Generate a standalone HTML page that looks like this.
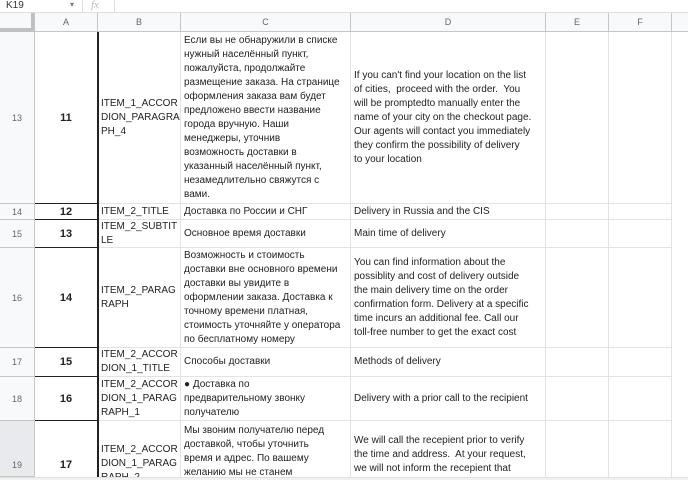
<!DOCTYPE html>
<html style="overflow:hidden;width:688px;height:480px"><head><meta charset="utf-8"><style>
*{margin:0;padding:0;box-sizing:border-box}
body{width:688px;height:480px;overflow:hidden;background:#fff;font-family:"Liberation Sans","DejaVu Sans",sans-serif;position:relative;color:#222}
.a{position:absolute}
.c{position:absolute;border-right:1px solid #e2e3e3;border-bottom:1px solid #e2e3e3;display:flex;align-items:center;overflow:hidden;font-size:10px;line-height:14px;white-space:nowrap;padding-left:3px}
.h{background:#f8f9fa;color:#666;font-size:9px;justify-content:center;padding:0;border-color:#c4c7c5}
.n{justify-content:center;font-weight:bold;font-size:11px;padding:0;border-bottom:1px solid #222}
</style></head><body>
<div class="a" style="left:0;top:0;width:688px;height:13px;border-bottom:1px solid #e0e0e0;background:#fff"></div>
<div class="a" style="left:6px;top:0;font-size:10px;line-height:12px;color:#333">K19</div>
<div class="a" style="left:70px;top:0;font-size:8px;color:#777">▾</div>
<div class="a" style="left:82px;top:0;width:1px;height:12px;background:#ddd"></div>
<div class="a" style="left:91px;top:-1px;font-size:11px;font-style:italic;color:#bbb;font-family:'Liberation Serif',serif">fx</div>
<div class="a" style="left:114px;top:0;width:1px;height:12px;background:#ddd"></div>

<div class="c h" style="left:0;top:13px;width:35px;height:19px;border-right:4px solid #c0c0c0;border-bottom:4px solid #c0c0c0"></div>
<div class="c h" style="left:35px;top:13px;width:63px;height:19px">A</div>
<div class="c h" style="left:98px;top:13px;width:83px;height:19px">B</div>
<div class="c h" style="left:181px;top:13px;width:170px;height:19px">C</div>
<div class="c h" style="left:351px;top:13px;width:195px;height:19px">D</div>
<div class="c h" style="left:546px;top:13px;width:63px;height:19px">E</div>
<div class="c h" style="left:609px;top:13px;width:63px;height:19px">F</div>
<div class="c h" style="left:672px;top:13px;width:20px;height:19px"></div>

<div class="c h" style="left:0;top:32px;width:35px;height:172px">13</div>
<div class="c h" style="left:0;top:204px;width:35px;height:16px">14</div>
<div class="c h" style="left:0;top:220px;width:35px;height:28px">15</div>
<div class="c h" style="left:0;top:248px;width:35px;height:100px">16</div>
<div class="c h" style="left:0;top:348px;width:35px;height:29px">17</div>
<div class="c h" style="left:0;top:377px;width:35px;height:44px">18</div>
<div class="c h" style="left:0;top:421px;width:35px;height:56px;background:#e8eaed;align-items:flex-start;padding-top:37px">19</div>

<div class="c n" style="left:35px;top:32px;width:63px;height:172px">11</div>
<div class="c n" style="left:35px;top:204px;width:63px;height:16px">12</div>
<div class="c n" style="left:35px;top:220px;width:63px;height:28px">13</div>
<div class="c n" style="left:35px;top:248px;width:63px;height:100px">14</div>
<div class="c n" style="left:35px;top:348px;width:63px;height:29px">15</div>
<div class="c n" style="left:35px;top:377px;width:63px;height:44px">16</div>
<div class="c n" style="left:35px;top:421px;width:63px;height:56px;align-items:flex-start;padding-top:37px;border-bottom:none">17</div>

<div class="c" style="left:98px;top:32px;width:83px;height:172px">ITEM_1_ACCOR<br>DION_PARAGRA<br>PH_4</div>
<div class="c" style="left:98px;top:204px;width:83px;height:16px">ITEM_2_TITLE</div>
<div class="c" style="left:98px;top:220px;width:83px;height:28px">ITEM_2_SUBTIT<br>LE</div>
<div class="c" style="left:98px;top:248px;width:83px;height:100px">ITEM_2_PARAG<br>RAPH</div>
<div class="c" style="left:98px;top:348px;width:83px;height:29px">ITEM_2_ACCOR<br>DION_1_TITLE</div>
<div class="c" style="left:98px;top:377px;width:83px;height:44px">ITEM_2_ACCOR<br>DION_1_PARAG<br>RAPH_1</div>
<div class="c" style="left:98px;top:421px;width:83px;height:56px;align-items:flex-start;padding-top:22px;border-bottom:none">ITEM_2_ACCOR<br>DION_1_PARAG<br>RAPH_2</div>

<div class="c" style="left:181px;top:32px;width:170px;height:172px">Если вы не обнаружили в списке<br>нужный населённый пункт,<br>пожалуйста, продолжайте<br>размещение заказа. На странице<br>оформления заказа вам будет<br>предложено ввести название<br>города вручную. Наши<br>менеджеры, уточнив<br>возможность доставки в<br>указанный населённый пункт,<br>незамедлительно свяжутся с<br>вами.</div>
<div class="c" style="left:181px;top:204px;width:170px;height:16px">Доставка по России и СНГ</div>
<div class="c" style="left:181px;top:220px;width:170px;height:28px">Основное время доставки</div>
<div class="c" style="left:181px;top:248px;width:170px;height:100px">Возможность и стоимость<br>доставки вне основного времени<br>доставки вы увидите в<br>оформлении заказа. Доставка к<br>точному времени платная,<br>стоимость уточняйте у оператора<br>по бесплатному номеру</div>
<div class="c" style="left:181px;top:348px;width:170px;height:29px">Способы доставки</div>
<div class="c" style="left:181px;top:377px;width:170px;height:44px">● Доставка по<br>предварительному звонку<br>получателю</div>
<div class="c" style="left:181px;top:421px;width:170px;height:56px;align-items:flex-start;padding-top:3px;border-bottom:none">Мы звоним получателю перед<br>доставкой, чтобы уточнить<br>время и адрес. По вашему<br>желанию мы не станем</div>

<div class="c" style="left:351px;top:32px;width:195px;height:172px">If you can't find your location on the list<br>of cities,&nbsp; proceed with the order.&nbsp; You<br>will be promptedto manually enter the<br>name of your city on the checkout page.<br>Our agents will contact you immediately<br>they confirm the possibility of delivery<br>to your location</div>
<div class="c" style="left:351px;top:204px;width:195px;height:16px">Delivery in Russia and the CIS</div>
<div class="c" style="left:351px;top:220px;width:195px;height:28px">Main time of delivery</div>
<div class="c" style="left:351px;top:248px;width:195px;height:100px">You can find information about the<br>possiblity and cost of delivery outside<br>the main delivery time on the order<br>confirmation form. Delivery at a specific<br>time incurs an additional fee. Call our<br>toll-free number to get the exact cost</div>
<div class="c" style="left:351px;top:348px;width:195px;height:29px">Methods of delivery</div>
<div class="c" style="left:351px;top:377px;width:195px;height:44px">Delivery with a prior call to the recipient</div>
<div class="c" style="left:351px;top:421px;width:195px;height:56px;align-items:flex-start;padding-top:13px;border-bottom:none">We will call the recepient prior to verify<br>the time and address.&nbsp; At your request,<br>we will not inform the recepient that</div>

<div class="c" style="left:546px;top:32px;width:63px;height:172px"></div>
<div class="c" style="left:546px;top:204px;width:63px;height:16px"></div>
<div class="c" style="left:546px;top:220px;width:63px;height:28px"></div>
<div class="c" style="left:546px;top:248px;width:63px;height:100px"></div>
<div class="c" style="left:546px;top:348px;width:63px;height:29px"></div>
<div class="c" style="left:546px;top:377px;width:63px;height:44px"></div>
<div class="c" style="left:546px;top:421px;width:63px;height:56px;border-bottom:none"></div>
<div class="c" style="left:609px;top:32px;width:63px;height:172px"></div>
<div class="c" style="left:609px;top:204px;width:63px;height:16px"></div>
<div class="c" style="left:609px;top:220px;width:63px;height:28px"></div>
<div class="c" style="left:609px;top:248px;width:63px;height:100px"></div>
<div class="c" style="left:609px;top:348px;width:63px;height:29px"></div>
<div class="c" style="left:609px;top:377px;width:63px;height:44px"></div>
<div class="c" style="left:609px;top:421px;width:63px;height:56px;border-bottom:none"></div>

<div class="a" style="left:97px;top:32px;width:2px;height:445px;background:#222"></div>
<div class="a" style="left:0;top:477px;width:688px;height:3px;background:#f1f1f1;border-top:1px solid #e0e0e0"></div>
</body></html>
